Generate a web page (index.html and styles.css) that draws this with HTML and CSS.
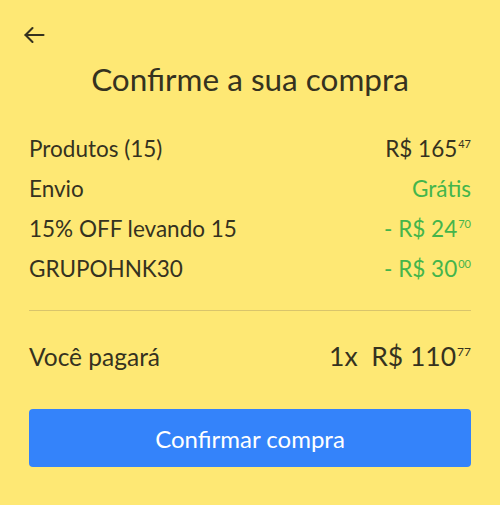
FILE: index.html
```html
<!DOCTYPE html>
<html lang="pt-BR">
<head>
    <meta charset="UTF-8">
    <meta name="viewport" content="width=device-width, initial-scale=1.0">
    <title>Confirme a sua compra</title>
    <link rel="stylesheet" href="styles.css">
</head>
<body>
    <header class="top-bar">
        <span class="back-button">
            <svg width="22" height="18" viewBox="0 0 22 18" fill="none" stroke="#35321f" stroke-width="2.1" stroke-linecap="round" stroke-linejoin="round">
                <path d="M2.5 9H20.5"/>
                <path d="M9.5 2L2.5 9l7 7"/>
            </svg>
        </span>
    </header>
    <main class="summary">
        <h1>Confirme a sua compra</h1>
        <div class="lines">
            <div class="line">
                <span>Produtos (15)</span>
                <span class="price">R$ 165<sup>47</sup></span>
            </div>
            <div class="line">
                <span>Envio</span>
                <span class="price green">Grátis</span>
            </div>
            <div class="line">
                <span>15% OFF levando 15</span>
                <span class="price green">- R$ 24<sup>70</sup></span>
            </div>
            <div class="line">
                <span>GRUPOHNK30</span>
                <span class="price green">- R$ 30<sup>00</sup></span>
            </div>
        </div>
        <hr class="divider">
        <div class="total">
            <span>Você pagará</span>
            <span class="total-price">1x&nbsp; R$ 110<sup>77</sup></span>
        </div>
        <button class="confirm-button">Confirmar compra</button>
    </main>
</body>
</html>
```

FILE: styles.css
```css
body {
    font-family: 'Lato', 'Open Sans', sans-serif;
    background-color: #fee874;
    color: #35321f;
    margin: 0;
    padding: 0;
}
.top-bar {
    height: 61px;
    padding: 26px 0 0 23px;
    box-sizing: border-box;
}
.back-button {
    display: block;
    width: 22px;
    height: 18px;
    cursor: pointer;
}
.back-button svg {
    display: block;
}
.summary {
    padding: 0 29px;
}
h1 {
    margin: 0;
    font-weight: 400;
    font-size: 31.5px;
    text-align: center;
    line-height: 36px;
}
.lines {
    margin-top: 31px;
}
.line {
    display: flex;
    justify-content: space-between;
    align-items: center;
    height: 40px;
    font-size: 22.5px;
}
.price {
    color: #35321f;
}
.green {
    color: #44b54b;
}
sup {
    font-size: 11px;
    vertical-align: 8.5px;
    line-height: 0;
    margin-left: 1px;
}
.divider {
    border: none;
    border-top: 1px solid #d9c46b;
    margin: 22px 0 0;
}
.total {
    display: flex;
    justify-content: space-between;
    align-items: center;
    height: 90px;
    font-size: 24.5px;
}
.total-price {
    font-size: 26.5px;
}
.total-price sup {
    font-size: 12px;
    vertical-align: 10.5px;
}
.confirm-button {
    display: block;
    width: 100%;
    height: 58px;
    margin-top: 8px;
    border: none;
    border-radius: 4px;
    background-color: #3483fa;
    color: white;
    font-family: inherit;
    font-size: 24px;
    cursor: pointer;
}
```
